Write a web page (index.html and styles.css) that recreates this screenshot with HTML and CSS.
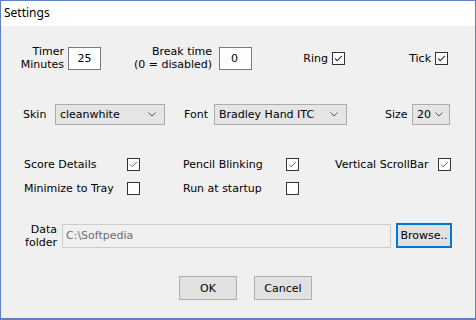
FILE: index.html
```html
<!DOCTYPE html>
<html>
<head>
<meta charset="utf-8">
<link rel="stylesheet" href="styles.css">
</head>
<body>
<div class="window">
  <div class="titlebar">Settings</div>
  <div class="content">
    <div class="row row-top">
      <div class="cell c1"><span class="lbl2">Timer<br>Minutes</span><div class="textbox center">25</div></div>
      <div class="cell c2"><span class="lbl2">Break time<br>(0 = disabled)</span><div class="textbox gap7">0</div></div>
      <div class="cell c3"><span>Ring</span><span class="cb checked dark"><svg viewBox="0 0 13 13"><polyline points="2.5,6.5 5,9 10.5,3.5"/></svg></span></div>
      <div class="cell c4"><span>Tick</span><span class="cb checked dark"><svg viewBox="0 0 13 13"><polyline points="2.5,6.5 5,9 10.5,3.5"/></svg></span></div>
    </div>
    <div class="row row-sel">
      <span class="slbl skin-l">Skin</span>
      <div class="select w-skin"><span>cleanwhite</span><svg class="arrow" viewBox="0 0 8 5"><polyline points="0.5,0.5 4,4 7.5,0.5"/></svg></div>
      <span class="slbl font-l">Font</span>
      <div class="select w-font"><span>Bradley Hand ITC</span><svg class="arrow" viewBox="0 0 8 5"><polyline points="0.5,0.5 4,4 7.5,0.5"/></svg></div>
      <span class="slbl size-l">Size</span>
      <div class="select w-size"><span>20</span><svg class="arrow" viewBox="0 0 8 5"><polyline points="0.5,0.5 4,4 7.5,0.5"/></svg></div>
    </div>
    <div class="checks">
      <div class="chk i1"><span class="clbl">Score Details</span><span class="cb checked"><svg viewBox="0 0 13 13"><polyline points="2.5,6.5 5,9 10.5,3.5"/></svg></span></div>
      <div class="chk i2"><span class="clbl">Pencil Blinking</span><span class="cb checked"><svg viewBox="0 0 13 13"><polyline points="2.5,6.5 5,9 10.5,3.5"/></svg></span></div>
      <div class="chk i3"><span class="clbl">Vertical ScrollBar</span><span class="cb checked"><svg viewBox="0 0 13 13"><polyline points="2.5,6.5 5,9 10.5,3.5"/></svg></span></div>
      <div class="chk i1"><span class="clbl">Minimize to Tray</span><span class="cb"></span></div>
      <div class="chk i2"><span class="clbl">Run at startup</span><span class="cb"></span></div>
    </div>
    <div class="row row-folder">
      <span class="lbl2 folder-l">Data<br>folder</span>
      <div class="pathbox">C:\Softpedia</div>
      <div class="btn browse">Browse..</div>
    </div>
    <div class="row row-btns">
      <div class="btn okc">OK</div>
      <div class="btn okc cancel">Cancel</div>
    </div>
  </div>
</div>
</body>
</html>
```
FILE: styles.css
```css
* { box-sizing: border-box; }
html, body { margin: 0; padding: 0; }
body {
  width: 476px;
  height: 320px;
  overflow: hidden;
  font-family: "DejaVu Sans", Verdana, sans-serif;
  font-size: 11px;
  color: #000;
}
.window {
  width: 476px;
  height: 320px;
  border: 1px solid #5b80c6;
  border-bottom-width: 2px;
  background: #f0f0f0;
  display: flex;
  flex-direction: column;
}
.titlebar {
  height: 25px;
  background: #fff;
  font-family: "Noto Sans", "Liberation Sans", sans-serif;
  font-size: 12px;
  line-height: 24px;
  padding-left: 3px;
  color: #000;
}
.content {
  display: flex;
  flex-direction: column;
}
.row { display: flex; align-items: center; }
.row-top { margin-top: 20px; height: 24px; }
.cell { display: flex; align-items: center; justify-content: flex-end; gap: 4px; }
.c1 { width: 100px; }
.c2 { width: 151px; }
.c3 { width: 93px; }
.c4 { width: 103px; }
.lbl2 { text-align: right; line-height: 13px; }
.textbox {
  width: 33px;
  height: 23px;
  background: #fff;
  border: 1px solid #7a7a7a;
  line-height: 21px;
  padding-left: 11px;
  font-size: 11px;
}
.textbox.center { padding-left: 0; text-align: center; }
.textbox.gap7 { margin-left: 3px; }
.cb {
  width: 13px;
  height: 13px;
  border: 1px solid #333;
  background: #fff;
  display: inline-flex;
  flex: none;
}
.cb svg { width: 11px; height: 11px; display: block; }
.cb svg polyline { fill: none; stroke: #555; stroke-width: 1.1; }
.cb.dark svg polyline { stroke: #333; stroke-width: 1.3; }
.cb svg { margin: 0; }
.row-sel { margin-top: 34px; height: 21px; padding-left: 22px; }
.slbl { flex: none; }
.skin-l { width: 32px; }
.font-l { width: 30px; margin-left: 19px; }
.size-l { width: 27px; margin-left: 38px; }
.select {
  height: 21px;
  background: #e5e5e5;
  border: 1px solid #acacac;
  display: flex;
  align-items: center;
  justify-content: space-between;
  padding: 0 8px 0 4px;
  flex: none;
}
.select .arrow { width: 8px; height: 5px; }
.select .arrow polyline { fill: none; stroke: #555; stroke-width: 1; }
.w-skin { width: 110px; }
.w-font { width: 133px; }
.w-size { width: 38px; padding-right: 6px; }
.checks {
  margin-top: 27px;
  padding-left: 23px;
  display: grid;
  grid-template-columns: 159px 152px 115px;
  grid-auto-rows: 24px;
}
.chk { display: flex; align-items: center; }
.clbl { width: 103px; flex: none; }
.row-folder { margin-top: 23px; height: 25px; }
.folder-l { width: 56px; flex: none; }
.pathbox {
  margin-left: 5px;
  width: 329px;
  height: 24px;
  border: 1px solid #cccccc;
  background: #f0f0f0;
  color: #6d6d6d;
  line-height: 22px;
  padding-left: 3px;
}
.btn {
  background: #e1e1e1;
  border: 1px solid #adadad;
  display: flex;
  align-items: center;
  justify-content: center;
}
.browse {
  margin-left: 5px;
  width: 56px;
  height: 25px;
  border: 2px solid #0078d7;
}
.row-btns { margin-top: 28px; height: 24px; padding-left: 178px; }
.okc { width: 58px; height: 24px; }
.cancel { margin-left: 17px; }
```
